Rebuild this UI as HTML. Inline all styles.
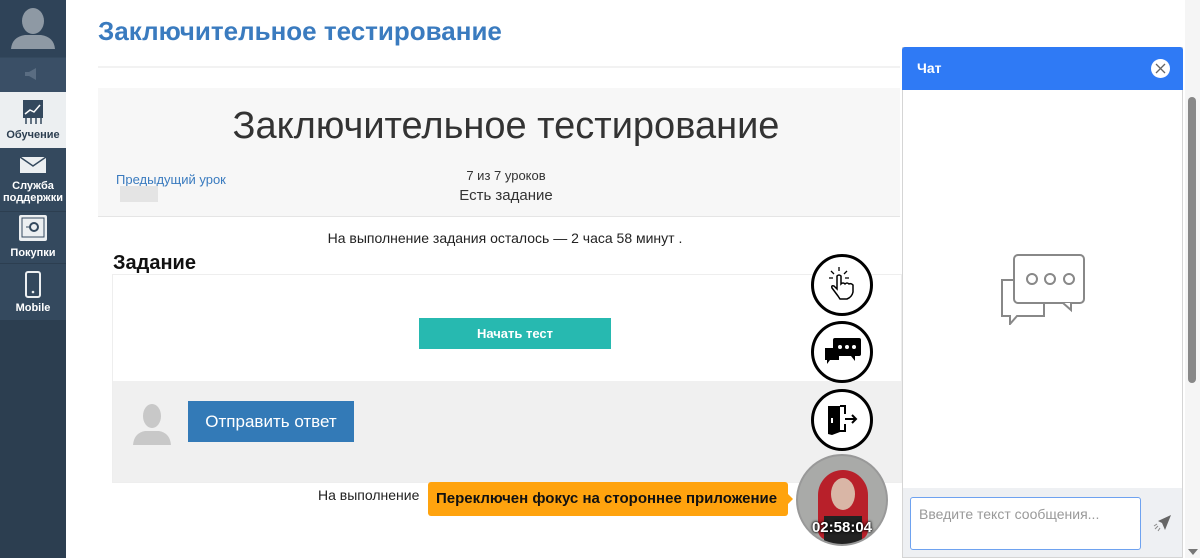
<!DOCTYPE html>
<html><head><meta charset="utf-8"><style>
*{box-sizing:border-box;margin:0;padding:0}
body{width:1200px;height:558px;overflow:hidden;background:#fff;font-family:"Liberation Sans",sans-serif;position:relative}
.a{position:absolute}
.side{left:0;top:0;width:66px;height:558px;background:#34495e}
.nav{position:absolute;left:0;width:66px;text-align:center;color:#fff;font-size:11px;font-weight:bold;line-height:12px}
</style></head><body>
<div class="a side">
 <div class="a" style="left:0;top:0;width:66px;height:57px;background:#2f4358"></div>
 <svg class="a" style="left:8px;top:5px" width="50" height="50" viewBox="0 0 50 50"><ellipse cx="25" cy="16" rx="11" ry="13" fill="#8e99a4"/><path d="M3 44 Q4 32 17 30 L33 30 Q46 32 47 44 Z" fill="#8e99a4"/></svg>
 <div class="a" style="left:0;top:58px;width:66px;height:34px;background:#3a4f66"></div>
 <svg class="a" style="left:24px;top:67px" width="18" height="14"><rect x="1" y="5" width="4" height="4" fill="#5a6d82"/><path d="M5 5 L12 1 L12 13 L5 9Z" fill="#5a6d82"/></svg>
 <div class="nav" style="top:92px;height:56px;background:#eceff1;color:#2c3e50">
  <svg style="margin-top:7px" width="24" height="28" viewBox="0 0 24 28"><rect x="2" y="1" width="20" height="18" fill="#34495e"/><path d="M4 15 L9 11 L13 13 L19 6" stroke="#fff" stroke-width="1.5" fill="none"/><path d="M5 19 V25 M10 19V25 M15 19V25 M20 19V25" stroke="#34495e" stroke-width="1.5"/></svg>
  <div style="margin-top:-1px">Обучение</div></div>
 <div class="nav" style="top:148px;height:64px;border-bottom:1px solid #2c3e50">
  <svg style="margin-top:8px" width="28" height="18"><rect x="1" y="1" width="26" height="16" fill="#eceff1"/><path d="M1 1 L14 10 L27 1" stroke="#34495e" stroke-width="1.5" fill="none"/></svg>
  <div style="margin-top:3px">Служба поддержки</div></div>
 <div class="nav" style="top:212px;height:52px;border-bottom:1px solid #2c3e50">
  <svg style="margin-top:2px" width="30" height="28"><rect x="1" y="1" width="28" height="26" fill="#eceff1" rx="2"/><rect x="4" y="4" width="22" height="19" fill="none" stroke="#34495e"/><circle cx="16" cy="13" r="4" fill="none" stroke="#34495e" stroke-width="2"/><path d="M8 13h4" stroke="#34495e"/></svg>
  <div style="margin-top:2px">Покупки</div></div>
 <div class="nav" style="top:264px;height:56px;background:#34495e">
  <svg style="margin-top:7px" width="18" height="28"><rect x="2" y="1" width="14" height="25" rx="2" fill="none" stroke="#eceff1" stroke-width="2"/><circle cx="9" cy="21" r="1.3" fill="#eceff1"/></svg>
  <div>Mobile</div></div>
 <div class="a" style="top:320px;left:0;width:66px;height:238px;background:#2c3e50"></div>
</div>

<div class="a" style="left:98px;top:16px;font-size:26px;font-weight:bold;color:#3a7bbf">Заключительное тестирование</div>
<div class="a" style="left:98px;top:66px;width:802px;height:2px;background:#f2f2f2"></div>
<div class="a" style="left:98px;top:88px;width:802px;height:129px;background:#f7f7f7;border-bottom:1px solid #e5e5e5"></div>
<div class="a" style="left:98px;top:105px;width:816px;text-align:center;font-size:38px;color:#333">Заключительное тестирование</div>
<div class="a" style="left:116px;top:172px;font-size:13px;color:#3a7bbf">Предыдущий урок</div>
<div class="a" style="left:120px;top:186px;width:38px;height:16px;background:#e4e4e4"></div>
<div class="a" style="left:406px;top:168px;width:200px;text-align:center;font-size:13px;color:#333">7 из 7 уроков</div>
<div class="a" style="left:406px;top:187px;width:200px;text-align:center;font-size:15px;color:#333">Есть задание</div>
<div class="a" style="left:300px;top:230px;width:410px;text-align:center;font-size:14px;color:#222">На выполнение задания осталось — 2 часа 58 минут .</div>
<div class="a" style="left:113px;top:252px;font-size:20px;font-weight:bold;color:#111">Задание</div>
<div class="a" style="left:112px;top:274px;width:790px;height:209px;border:1px solid #eee;background:#fff"></div>
<div class="a" style="left:113px;top:381px;width:788px;height:101px;background:#f0f0f0"></div>
<div class="a" style="left:419px;top:318px;width:192px;height:31px;background:#27b9b0;color:#fff;font-size:13px;font-weight:bold;text-align:center;line-height:31px">Начать тест</div>
<svg class="a" style="left:133px;top:403px" width="38" height="42" viewBox="0 0 38 42"><ellipse cx="19" cy="13" rx="9" ry="12" fill="#c8c8c8"/><path d="M0 42 Q1 30 12 28 L26 28 Q37 30 38 42Z" fill="#c8c8c8"/></svg>
<div class="a" style="left:188px;top:401px;width:166px;height:41px;background:#337ab7;color:#fff;font-size:17px;text-align:center;line-height:41px">Отправить ответ</div>
<div class="a" style="left:318px;top:487px;font-size:14px;color:#222">На выполнение</div>
<div class="a" style="left:428px;top:482px;width:360px;height:34px;background:#ffa30e;border-radius:3px;color:#111;font-size:15px;font-weight:bold;line-height:34px;padding-left:8px;white-space:nowrap">Переключен фокус на стороннее приложение</div>
<div class="a" style="left:786px;top:492px;width:0;height:0;border-top:7px solid transparent;border-bottom:7px solid transparent;border-left:7px solid #ffa30e"></div>

<div class="a" style="left:811px;top:254px;width:62px;height:62px;border:3px solid #000;border-radius:50%;background:#fff"></div>
<svg class="a" style="left:826px;top:266px" width="34" height="38" viewBox="0 0 34 38"><path d="M12 30 L6 22 Q5 19 8 20 L11 23 L11 10 Q13 8 15 10 L15 18 Q17 16 19 18 Q21 16 23 18 Q25 17 27 19 L27 26 Q26 31 21 33 L14 33Z" fill="none" stroke="#000" stroke-width="1.5"/><path d="M13 1v4M5 5l3 3M21 5l-3 3M3 12h4M19 12h4" stroke="#000" stroke-width="1.3"/></svg>
<div class="a" style="left:811px;top:321px;width:62px;height:62px;border:3px solid #000;border-radius:50%;background:#fff"></div>
<svg class="a" style="left:823px;top:336px" width="40" height="32" viewBox="0 0 40 32"><path d="M2 12 H16 V24 H7 L4 28 V24 H2Z" fill="#000"/><rect x="10" y="2" width="28" height="18" rx="2" fill="#000"/><path d="M28 20 L32 25 V20Z" fill="#000"/><circle cx="17" cy="11" r="2" fill="#fff"/><circle cx="24" cy="11" r="2" fill="#fff"/><circle cx="31" cy="11" r="2" fill="#fff"/></svg>
<div class="a" style="left:811px;top:389px;width:62px;height:62px;border:3px solid #000;border-radius:50%;background:#fff"></div>
<svg class="a" style="left:826px;top:404px" width="34" height="32" viewBox="0 0 34 32"><path d="M2 2 H14 V28 L6 31 L2 30Z" fill="#000"/><path d="M14 2 H19 V10 M19 20 V27 H14" stroke="#000" stroke-width="2" fill="none"/><path d="M19 15 H30 M26 11 L30 15 L26 19" stroke="#000" stroke-width="2" fill="none"/><rect x="5" y="14" width="2" height="5" fill="#fff"/></svg>
<div class="a" style="left:796px;top:454px;width:92px;height:92px;border-radius:50%;background:#a9aaa8;border:2px solid #999;overflow:hidden">
 <div class="a" style="left:20px;top:14px;width:50px;height:70px;border-radius:25px 25px 10px 10px;background:#b8202a"></div>
 <div class="a" style="left:33px;top:22px;width:24px;height:32px;border-radius:50%;background:#d9b6a6"></div>
 <div class="a" style="left:26px;top:60px;width:38px;height:30px;background:#222"></div>
</div>
<div class="a" style="left:796px;top:519px;width:92px;text-align:center;color:#fff;font-weight:bold;font-size:15px;text-shadow:0 0 3px #000,0 0 2px #000">02:58:04</div>

<div class="a" style="left:902px;top:47px;width:281px;height:511px;border:1px solid #d5d5d5;background:#fff"></div>
<div class="a" style="left:902px;top:47px;width:281px;height:43px;background:#2f7af5;border-radius:3px 3px 0 0"></div>
<div class="a" style="left:917px;top:60px;color:#fff;font-weight:bold;font-size:14px">Чат</div>
<div class="a" style="left:1151px;top:59px;width:19px;height:19px;border-radius:50%;background:#fff"></div>
<svg class="a" style="left:1155px;top:63px" width="11" height="11"><path d="M1 1L10 10M10 1L1 10" stroke="#666" stroke-width="1.3"/></svg>
<svg class="a" style="left:1000px;top:253px" width="88" height="72" viewBox="0 0 88 72"><path d="M14 27 H2 V63 H10 V71 L17 63 H44 V50" fill="none" stroke="#888" stroke-width="2"/><rect x="14" y="2" width="70" height="48" rx="4" fill="#fff" stroke="#888" stroke-width="2"/><path d="M63 50 L71 57 V50" fill="#fff" stroke="#888" stroke-width="2"/><circle cx="32" cy="26" r="5" fill="none" stroke="#888" stroke-width="2"/><circle cx="50" cy="26" r="5" fill="none" stroke="#888" stroke-width="2"/><circle cx="69" cy="26" r="5" fill="none" stroke="#888" stroke-width="2"/></svg>
<div class="a" style="left:903px;top:488px;width:279px;height:69px;background:#eef0f3"></div>
<div class="a" style="left:910px;top:497px;width:231px;height:53px;border:1px solid #6ea2f0;border-radius:3px;background:#fff;font-size:14px;color:#999;padding:8px 8px">Введите текст сообщения...</div>
<svg class="a" style="left:1152px;top:514px" width="20" height="18" viewBox="0 0 20 18"><path d="M19 1 L6 7 L10 9 L13 16Z" fill="#666"/><path d="M2 12l3-2M3 15l3-3M6 17l2-3" stroke="#888"/></svg>
<div class="a" style="left:1185px;top:0;width:15px;height:558px;background:#f5f5f5"></div>
<div class="a" style="left:1188px;top:97px;width:8px;height:286px;border-radius:4px;background:#888"></div>
<div class="a" style="left:1188px;top:549px;width:0;height:0;border-left:5px solid transparent;border-right:5px solid transparent;border-top:6px solid #777"></div>
</body></html>
